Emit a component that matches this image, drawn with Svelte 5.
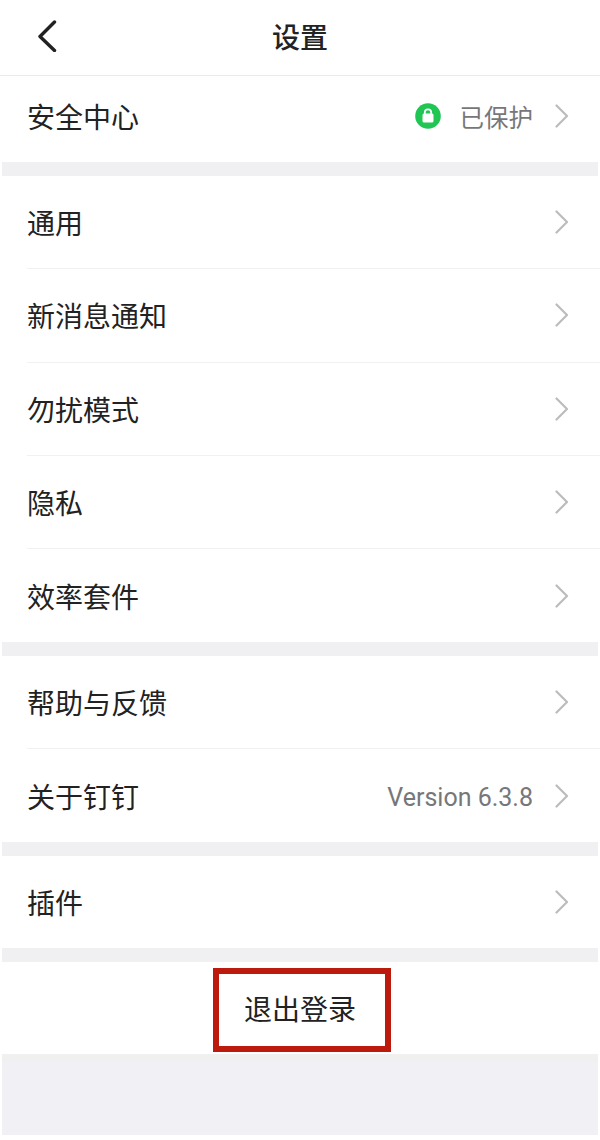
<script lang="ts">
	const groups = [
		[{ label: "安全中心", protectedState: true }],
		[
			{ label: "通用" },
			{ label: "新消息通知" },
			{ label: "勿扰模式" },
			{ label: "隐私" },
			{ label: "效率套件" },
		],
		[{ label: "帮助与反馈" }, { label: "关于钉钉", value: "Version 6.3.8" }],
		[{ label: "插件" }],
	];
</script>

<main class="page">
	<header class="topbar">
		<button class="back" aria-label="返回">
			<svg width="20" height="32" viewBox="0 0 20 32">
				<path d="M17.5 2 L3 16.5 L17.5 30.5" />
			</svg>
		</button>
		<h1>设置</h1>
	</header>

	{#each groups as rows, i}
		<section class="group" class:first={i === 0}>
			{#each rows as row}
				<div class="row">
					<span class="label">{row.label}</span>
					{#if row.protectedState}
						<svg class="lock" width="26" height="26" viewBox="0 0 26 26">
							<circle cx="13" cy="13" r="12.8" fill="#1fc653" />
							<rect x="7.5" y="10.5" width="11" height="9" rx="1.5" fill="#fff" />
							<path d="M9.8 11 V9.5 a3.2 3.2 0 0 1 6.4 0 V11" fill="none" stroke="#fff" stroke-width="1.8" />
						</svg>
						<span class="value status">已保护</span>
					{:else if row.value}
						<span class="value">{row.value}</span>
					{/if}
					<svg class="chevron" width="14" height="24" viewBox="0 0 14 24">
						<path d="M1.5 1.5 L12 12 L1.5 22.5" />
					</svg>
				</div>
			{/each}
		</section>
		<div class="gap"></div>
	{/each}

	<section class="logout">
		<span class="logout-text">退出登录</span>
		<!-- red outline sits on top of the row -->
		<div class="logout-box"></div>
	</section>

	<div class="footer"></div>
</main>

<style>
	:global(body) {
		margin: 0;
		background: #fff;
	}

	.page {
		display: flex;
		flex-direction: column;
		width: 600px;
		height: 1140px;
		background: #fff;
		font-family: "Noto Sans CJK SC", "Liberation Sans", sans-serif;
		color: #222;
		overflow: hidden;
	}

	.topbar {
		position: relative;
		box-sizing: border-box;
		display: flex;
		align-items: center;
		justify-content: center;
		height: 76px;
		padding-bottom: 4px;
		border-bottom: 1px solid #e9e9ec;
	}

	.topbar h1 {
		margin: 0;
		font-size: 28px;
		font-weight: 500;
		line-height: 1;
	}

	.back {
		position: absolute;
		left: 37px;
		top: 20px;
		padding: 0;
		border: 0;
		background: none;
	}

	.back path {
		fill: none;
		stroke: #222;
		stroke-width: 3.4;
		stroke-linecap: round;
		stroke-linejoin: round;
	}

	.group {
		display: flex;
		flex-direction: column;
	}

	.row {
		display: flex;
		align-items: center;
		height: 92.25px;
		margin-left: 27px;
		padding-right: 31px;
		border-bottom: 1px solid #f1f1f3;
	}

	.row:last-child {
		height: 93px;
		border-bottom: 0;
	}

	.row:only-child {
		box-sizing: border-box;
		height: 92px;
	}

	.first .row:only-child {
		height: 86px;
		padding-bottom: 6px;
	}

	.gap {
		flex: none;
		height: 14px;
		margin: 0 2px;
		background: #f0f0f2;
	}

	.label {
		flex: 1;
		font-size: 28px;
		line-height: 1;
	}

	.value {
		padding-top: 3px;
		font-family: Roboto, "Noto Sans CJK SC", sans-serif;
		font-size: 25px;
		color: #77777a;
		margin-right: 22px;
	}

	.status {
		padding-top: 0;
		font-family: "Noto Sans CJK SC", sans-serif;
		font-size: 24.5px;
		margin-left: 19px;
	}

	.chevron path {
		fill: none;
		stroke: #bcbcbf;
		stroke-width: 2.2;
		stroke-linecap: round;
		stroke-linejoin: round;
	}

	.logout {
		position: relative;
		flex: none;
		display: flex;
		align-items: center;
		justify-content: center;
		height: 92px;
	}

	.logout-text {
		font-size: 28px;
		line-height: 1;
	}

	.logout-box {
		position: absolute;
		left: 213px;
		top: 6px;
		box-sizing: border-box;
		width: 178px;
		height: 84px;
		border: 6px solid #bd1a0e;
	}

	.footer {
		flex: 1;
		margin: 0 2px 5px;
		border-top: 8px solid #f0f0f0;
		background: #f0f0f5;
	}
</style>
